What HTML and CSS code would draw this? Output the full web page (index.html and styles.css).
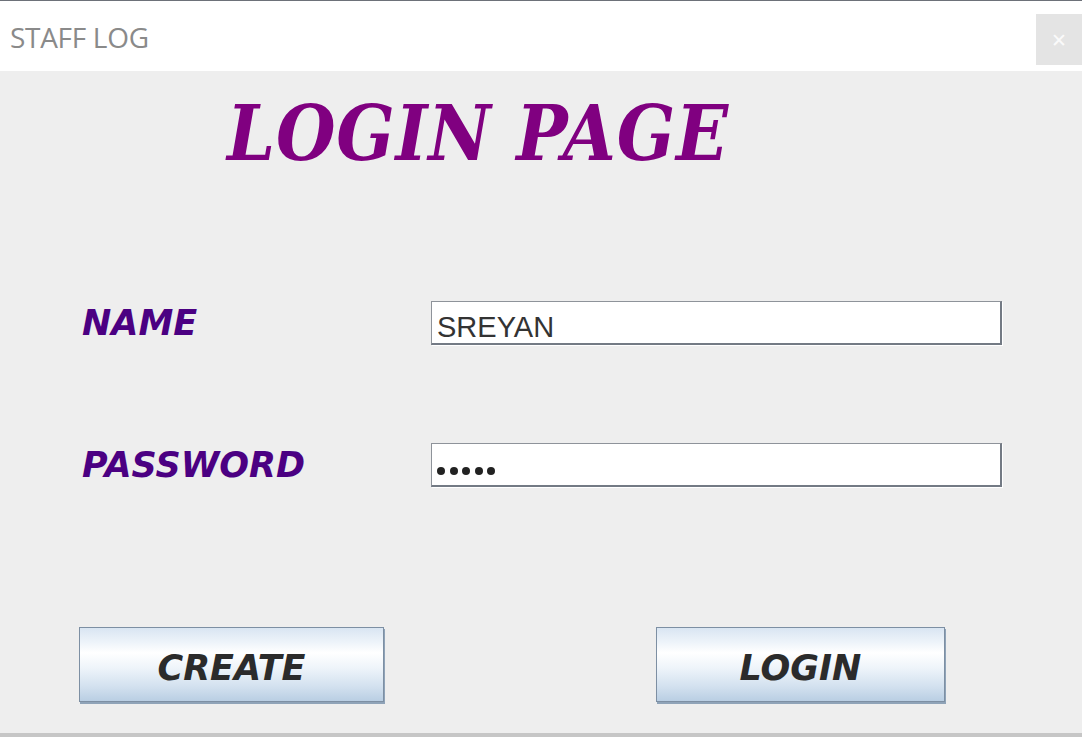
FILE: index.html
```html
<!DOCTYPE html>
<html>
<head>
<meta charset="utf-8">
<title>STAFF LOG</title>
<link rel="stylesheet" href="styles.css">
</head>
<body>
<div class="window">
  <div class="topline"></div>
  <header class="titlebar">
    <span class="title">STAFF LOG</span>
    <button class="close" aria-label="Close">&#x2715;</button>
  </header>
  <main class="main">
    <h1 class="heading">LOGIN PAGE</h1>
    <div class="form">
      <label class="label">NAME</label>
      <div class="field"><span class="value">SREYAN</span></div>
      <label class="label">PASSWORD</label>
      <div class="field"><span class="dots"><i></i><i></i><i></i><i></i><i></i></span></div>
    </div>
    <div class="actions">
      <button class="btn btn-create">CREATE</button>
      <button class="btn btn-login">LOGIN</button>
    </div>
  </main>
  <div class="bottombar"></div>
</div>
</body>
</html>
```
FILE: styles.css
```css
html, body {
  margin: 0;
  padding: 0;
  width: 1082px;
  height: 737px;
  overflow: hidden;
  background: #eeeeee;
}

.window {
  display: flex;
  flex-direction: column;
  width: 1082px;
  height: 737px;
}

.topline {
  height: 1px;
  background: #6d7179;
  flex: none;
}

.titlebar {
  height: 70px;
  flex: none;
  background: #ffffff;
  display: flex;
  align-items: flex-start;
  justify-content: space-between;
}

.title {
  font-family: "Open Sans", "Noto Sans", sans-serif;
  font-size: 28px;
  line-height: 28px;
  color: #8a8a8a;
  margin: 22px 0 0 10px;
  letter-spacing: -0.3px;
}

.close {
  margin-top: 13px;
  width: 46px;
  height: 51px;
  border: none;
  padding: 0;
  background: #e4e4e4;
  color: #fafafa;
  font-family: "DejaVu Sans", sans-serif;
  font-size: 19px;
}

.main {
  flex: 1;
  background: #eeeeee;
  display: flex;
  flex-direction: column;
}

.heading {
  margin: 22px 0 0 227px;
  font-family: "DejaVu Serif", serif;
  font-stretch: condensed;
  font-weight: bold;
  font-style: italic;
  font-size: 76px;
  line-height: 82px;
  letter-spacing: 0.8px;
  color: #800080;
}

.form {
  margin-top: 126px;
  padding-left: 82px;
  display: grid;
  grid-template-columns: 349px 571px;
  grid-auto-rows: 44px;
  row-gap: 98px;
  align-items: center;
}

.label {
  font-family: "DejaVu Sans", sans-serif;
  font-weight: bold;
  font-style: italic;
  font-size: 35px;
  line-height: 36px;
  color: #4b0082;
}

.field {
  box-sizing: border-box;
  height: 44px;
  background: #ffffff;
  border-top: 1px solid #8e939a;
  border-left: 1px solid #8e939a;
  border-right: 2px solid #737a84;
  border-bottom: 2px solid #737a84;
  box-shadow: 1px 1px 0 #ffffff;
  padding: 0 5px;
  overflow: hidden;
}

.value {
  display: block;
  padding-top: 11px;
  font-family: "Liberation Sans", Arial, sans-serif;
  font-size: 29px;
  line-height: 29px;
  color: #333333;
}

.dots {
  display: flex;
  gap: 4.5px;
  padding-top: 23px;
}

.dots i {
  display: block;
  width: 8px;
  height: 8px;
  border-radius: 50%;
  background: #222222;
}

.actions {
  margin-top: 140px;
  padding-left: 79px;
  display: flex;
}

.btn {
  box-sizing: border-box;
  height: 75px;
  border: 1px solid #7d8fa3;
  box-shadow: 1px 2px 0 #8fa3b8;
  background: linear-gradient(to bottom, #d9e5f2 0%, #eef4fa 20%, #ffffff 34%, #eef4fa 55%, #d3e1ef 80%, #b9cee3 100%);
  font-family: "DejaVu Sans", sans-serif;
  font-weight: bold;
  font-style: italic;
  font-size: 35px;
  line-height: 34px;
  color: #2b2b2b;
  padding: 7px 0 0;
  display: flex;
  align-items: center;
  justify-content: center;
}

.btn-create {
  width: 305px;
}

.btn-login {
  width: 289px;
  margin-left: 272px;
}

.bottombar {
  height: 4px;
  flex: none;
  background: #c6c6c6;
}
```
